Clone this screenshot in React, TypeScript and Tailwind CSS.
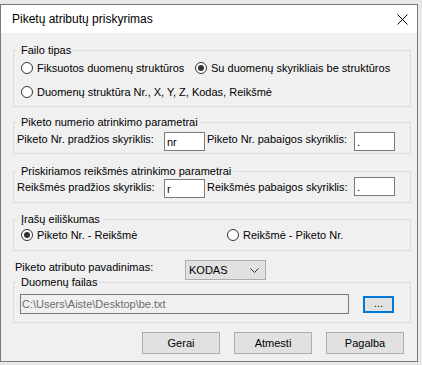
import { ReactNode } from 'react';

function Radio({ checked }: { checked?: boolean }) {
  return (
    <span className="flex h-[12px] w-[12px] shrink-0 items-center justify-center rounded-full border border-[#333333] bg-white">
      {checked && <span className="h-[6px] w-[6px] rounded-full bg-[#333333]" />}
    </span>
  );
}

function RadioOption({ label, checked, className = '' }: { label: string; checked?: boolean; className?: string }) {
  return (
    <label className={`flex h-[18px] items-center gap-[4px] ${className}`}>
      <Radio checked={checked} />
      <span className="whitespace-nowrap">{label}</span>
    </label>
  );
}

function GroupBox({ title, className = '', children }: { title: string; className?: string; children: ReactNode }) {
  return (
    <fieldset className={`ml-[12px] w-[398px] border border-[#dcdcdc] ${className}`}>
      <legend className="ml-[2px] pl-[5px] pr-[2px] leading-[14px]">{title}</legend>
      {children}
    </fieldset>
  );
}

function TextBox({ value, className = '' }: { value: string; className?: string }) {
  return (
    <div className={`h-[19px] w-[41px] shrink-0 border border-[#7a7a7a] bg-white pl-[2px] pt-[2px] leading-[14px] ${className}`}>
      {value}
    </div>
  );
}

function Button({ label }: { label: string }) {
  return (
    <button className="flex h-[22px] w-[78px] items-center justify-center border border-[#adadad] bg-[#e1e1e1] leading-[14px]">
      {label}
    </button>
  );
}

export default function App() {
  return (
    <div className="h-[365px] w-[422px] bg-[#e9e9e9] pt-[4px] font-['Liberation_Sans',Arial,sans-serif] text-[11px] leading-[14px] text-black">
      <div className="flex h-[358px] w-[418px] flex-col border border-[#7a7a7a] bg-[#f0f0f0]">
        {/* title bar */}
        <div className="flex h-[28px] shrink-0 items-center justify-between bg-white pl-[11px] pr-[9px]">
          <span className="text-[12px]">Piketų atributų priskyrimas</span>
          <svg width="11" height="11" viewBox="0 0 11 11" className="text-black">
            <path d="M0.5 0.5 L10.5 10.5 M10.5 0.5 L0.5 10.5" stroke="currentColor" strokeWidth="1" />
          </svg>
        </div>

        <GroupBox title="Failo tipas" className="mt-[10px] pb-[5px]">
          <div className="mt-[2px] flex pl-[7px]">
            <RadioOption label="Fiksuotos duomenų struktūros" className="w-[174px]" />
            <RadioOption label="Su duomenų skyrikliais be struktūros" checked />
          </div>
          <div className="mt-[6px] flex pl-[7px]">
            <RadioOption label="Duomenų struktūra Nr., X, Y, Z, Kodas, Reikšmė" />
          </div>
        </GroupBox>

        <GroupBox title="Piketo numerio atrinkimo parametrai" className="mt-[8px] pb-[2px]">
          <div className="mt-[3px] flex h-[19px] items-start pl-[3px]">
            <span className="w-[147px] whitespace-nowrap">Piketo Nr. pradžios skyriklis:</span>
            <TextBox value="nr" />
            <span className="ml-[2px] w-[147px] whitespace-nowrap">Piketo Nr. pabaigos skyriklis:</span>
            <TextBox value="." />
          </div>
        </GroupBox>

        <GroupBox title="Priskiriamos reikšmės atrinkimo parametrai" className="mt-[10px] pb-[3px]">
          <div className="flex h-[21px] items-start pl-[3px]">
            <span className="mt-[2px] w-[147px] whitespace-nowrap">Reikšmės pradžios skyriklis:</span>
            <TextBox value="r" className="mt-[1px]" />
            <span className="ml-[2px] mt-[2px] w-[147px] whitespace-nowrap">Reikšmės pabaigos skyriklis:</span>
            <TextBox value="." className="-mt-[1px]" />
          </div>
        </GroupBox>

        <GroupBox title="Įrašų eiliškumas" className="mt-[9px] pb-[6px]">
          <div className="flex pl-[7px]">
            <RadioOption label="Piketo Nr. - Reikšmė" checked className="w-[206px]" />
            <RadioOption label="Reikšmė - Piketo Nr." />
          </div>
        </GroupBox>

        <div className="ml-[14px] mt-[9px] flex h-[15px] items-start">
          <span className="w-[170px] whitespace-nowrap">Piketo atributo pavadinimas:</span>
          <div className="flex h-[20px] w-[81px] shrink-0 items-center justify-between border border-[#adadad] bg-[#e1e1e1] pl-[3px] pr-[6px]">
            <span>KODAS</span>
            <svg width="9" height="5" viewBox="0 0 9 5">
              <path d="M0.5 0.5 L4.5 4.5 L8.5 0.5" fill="none" stroke="#333333" strokeWidth="1" />
            </svg>
          </div>
        </div>

        <GroupBox title="Duomenų failas" className="pb-[8px]">
          <div className="mt-[5px] flex items-start pl-[6px]">
            <div className="h-[20px] w-[329px] border border-[#7a7a7a] bg-[#f0f0f0] pl-[1px] pt-[2px] text-[#6d6d6d]">
              C:\Users\Aiste\Desktop\be.txt
            </div>
            <button className="ml-[14px] mt-[2px] flex h-[17px] w-[31px] items-center justify-center border-2 border-[#0078d7] bg-[#e1e1e1] pb-[3px] leading-[10px]">
              ...
            </button>
          </div>
        </GroupBox>

        <div className="mr-[13px] mt-[9px] flex justify-end gap-[14px]">
          <Button label="Gerai" />
          <Button label="Atmesti" />
          <Button label="Pagalba" />
        </div>
      </div>
    </div>
  );
}
